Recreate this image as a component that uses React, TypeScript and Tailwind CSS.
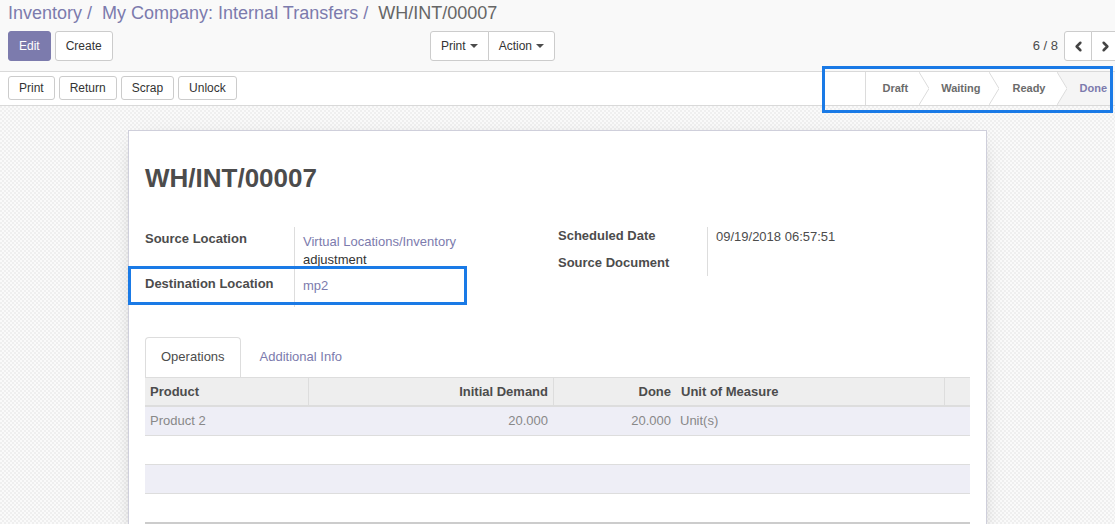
import React from 'react';
import { ChevronLeft, ChevronRight } from 'lucide-react';

// small down caret used by the Print / Action dropdowns
function Caret() {
  return (
    <svg width="8" height="4" viewBox="0 0 8 4" className="ml-[4px] inline-block">
      <path d="M0 0h8L4 4z" fill="#4c4c4c" />
    </svg>
  );
}

// chevron separator of the status bar
function Arrow({ grey }: { grey?: boolean }) {
  return (
    <svg width="10" height="33" viewBox="0 0 10 33" className={grey ? 'shrink-0 bg-[#f5f5f5]' : 'shrink-0 bg-white'}>
      <path d="M0 0L10 16.5L0 33Z" fill="#ffffff" />
      <path d="M0 0L10 16.5L0 33" fill="none" stroke="#dcdcdc" />
    </svg>
  );
}

const smallBtn = 'h-[24px] rounded-[3px] border border-[#cccccc] bg-white px-[10px] text-[12px] leading-[22px] text-[#333333]';

const columns = 'grid grid-cols-[163px_245px_123px_268px_1fr]';

export default function App() {
  return (
    <div className="relative h-[524px] w-[1115px] overflow-hidden bg-[image:repeating-conic-gradient(#efefef_0_25%,#fafafa_0_50%)] bg-[length:4px_4px] font-['Liberation_Sans',Arial,sans-serif] text-[13px] text-[#4c4c4c]">
      {/* control panel */}
      <div className="border-b border-[#d9d9d9] bg-[#f9f9f9] pb-[10px] pl-[8px] pt-[2px]">
        <div className="text-[18px] leading-[22px]">
          <span className="text-[#7c7bad]">Inventory</span>
          <span className="px-[5px] text-[#7c7bad]">/&nbsp;</span>
          <span className="text-[#7c7bad]">My Company: Internal Transfers</span>
          <span className="px-[5px] text-[#7c7bad]">/&nbsp;</span>
          <span className="text-[#666666]">WH/INT/00007</span>
        </div>
        <div className="mt-[7px] flex h-[30px] items-stretch">
          <div className="flex w-[547px] justify-between">
            <div className="flex gap-[4px] text-[12px]">
              <button className="rounded-[3px] border border-[#7c7bad] bg-[#7c7bad] px-[10px] text-white">Edit</button>
              <button className="rounded-[3px] border border-[#cccccc] bg-white px-[10px] text-[#333333]">Create</button>
            </div>
            <div className="flex text-[12px] text-[#333333]">
              <button className="flex items-center rounded-l-[3px] border border-[#cccccc] bg-white px-[10px]">
                Print
                <Caret />
              </button>
              <button className="-ml-px flex items-center rounded-r-[3px] border border-[#cccccc] bg-white px-[10px]">
                Action
                <Caret />
              </button>
            </div>
          </div>
          <div className="mr-[-4px] flex flex-1 items-center justify-end">
            <span className="mr-[6px] text-[13px] text-[#4c4c4c]">6 / 8</span>
            <div className="flex h-full">
              <button className="flex w-[28px] items-center justify-center rounded-l-[3px] border border-[#cccccc] bg-white">
                <ChevronLeft size={15} strokeWidth={4} color="#444444" />
              </button>
              <button className="-ml-px flex w-[28px] items-center justify-center rounded-r-[3px] border border-[#cccccc] bg-white">
                <ChevronRight size={15} strokeWidth={4} color="#444444" />
              </button>
            </div>
          </div>
        </div>
      </div>

      {/* status bar */}
      <div className="flex h-[34px] justify-between border-b border-[#d9d9d9] bg-white">
        <div className="flex items-start gap-[4px] pl-[8px] pt-[4px]">
          <button className={smallBtn}>Print</button>
          <button className={smallBtn}>Return</button>
          <button className={smallBtn}>Scrap</button>
          <button className={smallBtn}>Unlock</button>
        </div>
        <div className="flex border-l border-[#dcdcdc] text-[11px] font-bold leading-[33px] text-[#6b6b6b]">
          <span className="pl-[16px] pr-[11px]">Draft</span>
          <Arrow />
          <span className="pl-[12px] pr-[9px]">Waiting</span>
          <Arrow />
          <span className="pl-[13px] pr-[11px]">Ready</span>
          <Arrow grey />
          <span className="bg-[#f5f5f5] pl-[13px] pr-[8px] text-[#7c7bad]">Done</span>
        </div>
      </div>

      {/* form sheet */}
      <div className="mx-auto mt-[24px] w-[859px] border border-[#cfcfdb] bg-white px-[16px] pt-[33px] shadow-[0_5px_20px_-12px_rgba(0,0,0,0.5)]">
        <h1 className="text-[26px] font-bold leading-[28px] text-[#4c4c4c]">WH/INT/00007</h1>

        <div className="mt-[35px] flex">
          <div className="grid w-[413px] grid-cols-[150px_1fr] leading-[18px]">
            <div className="border-r border-[#dddddd] pt-[3px] font-bold">Source Location</div>
            <div className="pb-[3px] pl-[8px] pt-[6px]">
              <div className="text-[#7c7bad]">Virtual Locations/Inventory</div>
              <div className="text-[#333333]">adjustment</div>
            </div>
            <div className="border-r border-[#dddddd] pt-[3px] font-bold">Destination Location</div>
            <div className="pb-[12px] pl-[8px] pt-[5px] text-[#7c7bad]">mp2</div>
          </div>
          <div className="grid flex-1 grid-cols-[150px_1fr] content-start leading-[18px]">
            <div className="border-r border-[#dddddd] pb-[9px] font-bold">Scheduled Date</div>
            <div className="pl-[8px] pt-[1px]">09/19/2018 06:57:51</div>
            <div className="border-r border-[#dddddd] pb-[4px] font-bold">Source Document</div>
            <div />
          </div>
        </div>

        {/* notebook */}
        <div className="mt-[30px] flex h-[40px] items-stretch">
          <div className="rounded-t-[4px] border border-b-0 border-[#dddddd] bg-white px-[15px] leading-[38px] text-[#4c4c4c]">Operations</div>
          <div className="ml-[3px] border border-transparent px-[15px] leading-[38px] text-[#7c7bad]">Additional Info</div>
        </div>

        <div className={`${columns} h-[30px] border-b-2 border-t border-[#dddddd] bg-[#eeeeee] font-bold leading-[27px] text-[#4c4c4c]`}>
          <div className="px-[5px]">Product</div>
          <div className="border-l border-[#dddddd] px-[5px] text-right">Initial Demand</div>
          <div className="border-l border-[#dddddd] px-[5px] text-right">Done</div>
          <div className="px-[5px]">Unit of Measure</div>
          <div className="border-l border-[#dddddd]" />
        </div>
        <div className={`${columns} h-[29px] border-b border-[#dddddd] bg-[#eeeef6] leading-[28px] text-[#888888]`}>
          <div className="px-[5px]">Product 2</div>
          <div className="px-[5px] text-right">20.000</div>
          <div className="px-[5px] text-right">20.000</div>
          <div className="px-[4px]">Unit(s)</div>
          <div />
        </div>
        <div className="h-[29px] border-b border-[#dddddd] bg-white" />
        <div className="h-[29px] border-b border-[#dddddd] bg-[#eeeef6]" />
        <div className="h-[28px] bg-white" />
        <div className="h-[20px] border-t-2 border-[#cccccc]" />
      </div>

      {/* highlight frames */}
      <div className="absolute left-[822px] top-[66px] h-[47px] w-[291px] border-[3px] border-[#1a7ae6]" />
      <div className="absolute left-[128px] top-[266px] h-[39px] w-[339px] border-[3px] border-[#1a7ae6]" />
    </div>
  );
}
